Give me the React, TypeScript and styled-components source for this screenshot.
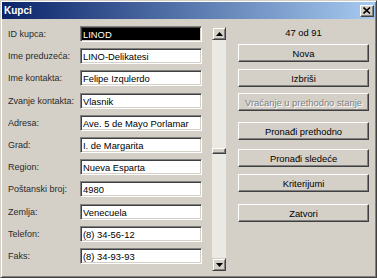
import React from "react";
import styled, { createGlobalStyle } from "styled-components";

const GlobalStyle = createGlobalStyle`
  body {
    margin: 0;
    background: #d4d0c8;
  }
`;

const fields = [
  { label: "ID kupca:", value: "LINOD", selected: true },
  { label: "Ime preduzeća:", value: "LINO-Delikatesi" },
  { label: "Ime kontakta:", value: "Felipe Izqulerdo" },
  { label: "Zvanje kontakta:", value: "Vlasnik" },
  { label: "Adresa:", value: "Ave. 5 de Mayo Porlamar" },
  { label: "Grad:", value: "I. de Margarita" },
  { label: "Region:", value: "Nueva Esparta" },
  { label: "Poštanski broj:", value: "4980" },
  { label: "Zemlja:", value: "Venecuela" },
  { label: "Telefon:", value: "(8) 34-56-12" },
  { label: "Faks:", value: "(8) 34-93-93" },
];

const actions = [
  { text: "Nova", gap: 4 },
  { text: "Izbriši", gap: 7 },
  { text: "Vraćanje u prethodno stanje", gap: 6, disabled: true },
  { text: "Pronađi prethodno", gap: 11 },
  { text: "Pronađi sledeće", gap: 9 },
  { text: "Kriterijumi", gap: 7 },
  { text: "Zatvori", gap: 12 },
];

const current = 47;
const total = 91;
const TRACK = 218;
const THUMB = 6;

const App = () => {
  const thumbOffset = Math.round(((current - 1) / (total - 1)) * (TRACK - THUMB));

  return (
    <>
      <GlobalStyle />
      <Window>
        <TitleBar>
          <Title>Kupci</Title>
          <CloseButton>
            <svg width="8" height="7" viewBox="0 0 8 7">
              <path d="M0.5 0.5 L7 6.5 M7 0.5 L0.5 6.5" stroke="#000" strokeWidth="1.6" />
            </svg>
          </CloseButton>
        </TitleBar>
        <Body>
          <Form>
            {fields.map((f) => (
              <React.Fragment key={f.label}>
                <Label>{f.label}</Label>
                <Field $selected={f.selected} readOnly value={f.value} />
              </React.Fragment>
            ))}
          </Form>
          <ScrollBar>
            <ArrowButton>
              <svg width="7" height="4" viewBox="0 0 7 4">
                <path d="M3.5 0 L7 4 L0 4 Z" fill="#000" />
              </svg>
            </ArrowButton>
            <Track>
              <Thumb style={{ marginTop: thumbOffset }} />
            </Track>
            <ArrowButton>
              <svg width="7" height="4" viewBox="0 0 7 4">
                <path d="M0 0 L7 0 L3.5 4 Z" fill="#000" />
              </svg>
            </ArrowButton>
          </ScrollBar>
          <Actions>
            <Counter>
              {current} od {total}
            </Counter>
            {actions.map((a) => (
              <ActionButton key={a.text} $gap={a.gap} disabled={a.disabled}>
                {a.text}
              </ActionButton>
            ))}
          </Actions>
        </Body>
      </Window>
    </>
  );
};

export default App;

const Window = styled.div`
  width: 377px;
  height: 278px;
  box-sizing: border-box;
  background: #d4d0c8;
  border: 1px solid;
  border-color: #d4d0c8 #404040 #404040 #d4d0c8;
  box-shadow: inset 1px 1px #ffffff, inset -1px -1px #808080;
  padding: 1px;
  display: flex;
  flex-direction: column;
  font-family: "Liberation Sans", Arial, sans-serif;
`;

const TitleBar = styled.div`
  height: 17px;
  display: flex;
  align-items: center;
  justify-content: space-between;
  padding: 0 1px 0 2px;
  background: linear-gradient(to right, #0a246a, #a6caf0);
`;

const Title = styled.span`
  color: #ffffff;
  font-weight: bold;
  font-size: 10px;
`;

const CloseButton = styled.div`
  width: 14px;
  height: 12px;
  box-sizing: border-box;
  background: #d4d0c8;
  border: 1px solid;
  border-color: #ffffff #404040 #404040 #ffffff;
  box-shadow: inset -1px -1px #808080;
  display: flex;
  align-items: center;
  justify-content: center;
`;

const Body = styled.div`
  flex: 1;
  display: flex;
  padding-left: 6px;
`;

const Form = styled.div`
  margin-top: 7px;
  display: grid;
  grid-template-columns: 72px 122px;
  grid-auto-rows: 16px;
  row-gap: 6.2px;
  align-content: start;
`;

const Label = styled.div`
  display: flex;
  align-items: center;
  font-size: 9px;
  color: #2a2a2a;
  white-space: nowrap;
`;

const Field = styled.input<{ $selected?: boolean }>`
  box-sizing: border-box;
  width: 122px;
  height: 16px;
  margin: 0;
  padding: 1px 1px 0 2px;
  font-family: "Liberation Sans", Arial, sans-serif;
  font-size: 9.4px;
  color: ${(p) => (p.$selected ? "#ffffff" : "#000000")};
  background: ${(p) => (p.$selected ? "#000000" : "#ffffff")};
  border: 1px solid;
  border-color: #808080 #ffffff #ffffff #808080;
  box-shadow: inset 1px 1px #404040, inset -1px -1px #d4d0c8;
  outline: none;
`;

const ScrollBar = styled.div`
  margin: 8px 0 0 10px;
  width: 14px;
  height: 244px;
  display: flex;
  flex-direction: column;
`;

const ArrowButton = styled.div`
  height: 13px;
  box-sizing: border-box;
  background: #d4d0c8;
  border: 1px solid;
  border-color: #d4d0c8 #404040 #404040 #d4d0c8;
  box-shadow: inset 1px 1px #ffffff, inset -1px -1px #808080;
  display: flex;
  align-items: center;
  justify-content: center;
`;

const Track = styled.div`
  flex: 1;
  background: #ebe9e4;
  display: flex;
  flex-direction: column;
`;

const Thumb = styled.div`
  height: ${THUMB}px;
  box-sizing: border-box;
  background: #d4d0c8;
  border: 1px solid;
  border-color: #ffffff #404040 #404040 #ffffff;
  box-shadow: inset -1px -1px #808080;
`;

const Actions = styled.div`
  margin-left: 12px;
  width: 131px;
  display: flex;
  flex-direction: column;
`;

const Counter = styled.div`
  margin-top: 5px;
  height: 16px;
  display: flex;
  align-items: center;
  justify-content: center;
  font-size: 9.4px;
  color: #000000;
`;

const ActionButton = styled.button<{ $gap: number }>`
  margin: ${(p) => p.$gap}px 0 0 0;
  height: 18px;
  width: 100%;
  padding: 0;
  box-sizing: border-box;
  background: #d4d0c8;
  border: 1px solid;
  border-color: #ffffff #404040 #404040 #ffffff;
  box-shadow: inset -1px -1px #808080;
  font-family: "Liberation Sans", Arial, sans-serif;
  font-size: 9.4px;
  color: #000000;

  &:disabled {
    color: #808080;
    text-shadow: 1px 1px #ffffff;
  }
`;
